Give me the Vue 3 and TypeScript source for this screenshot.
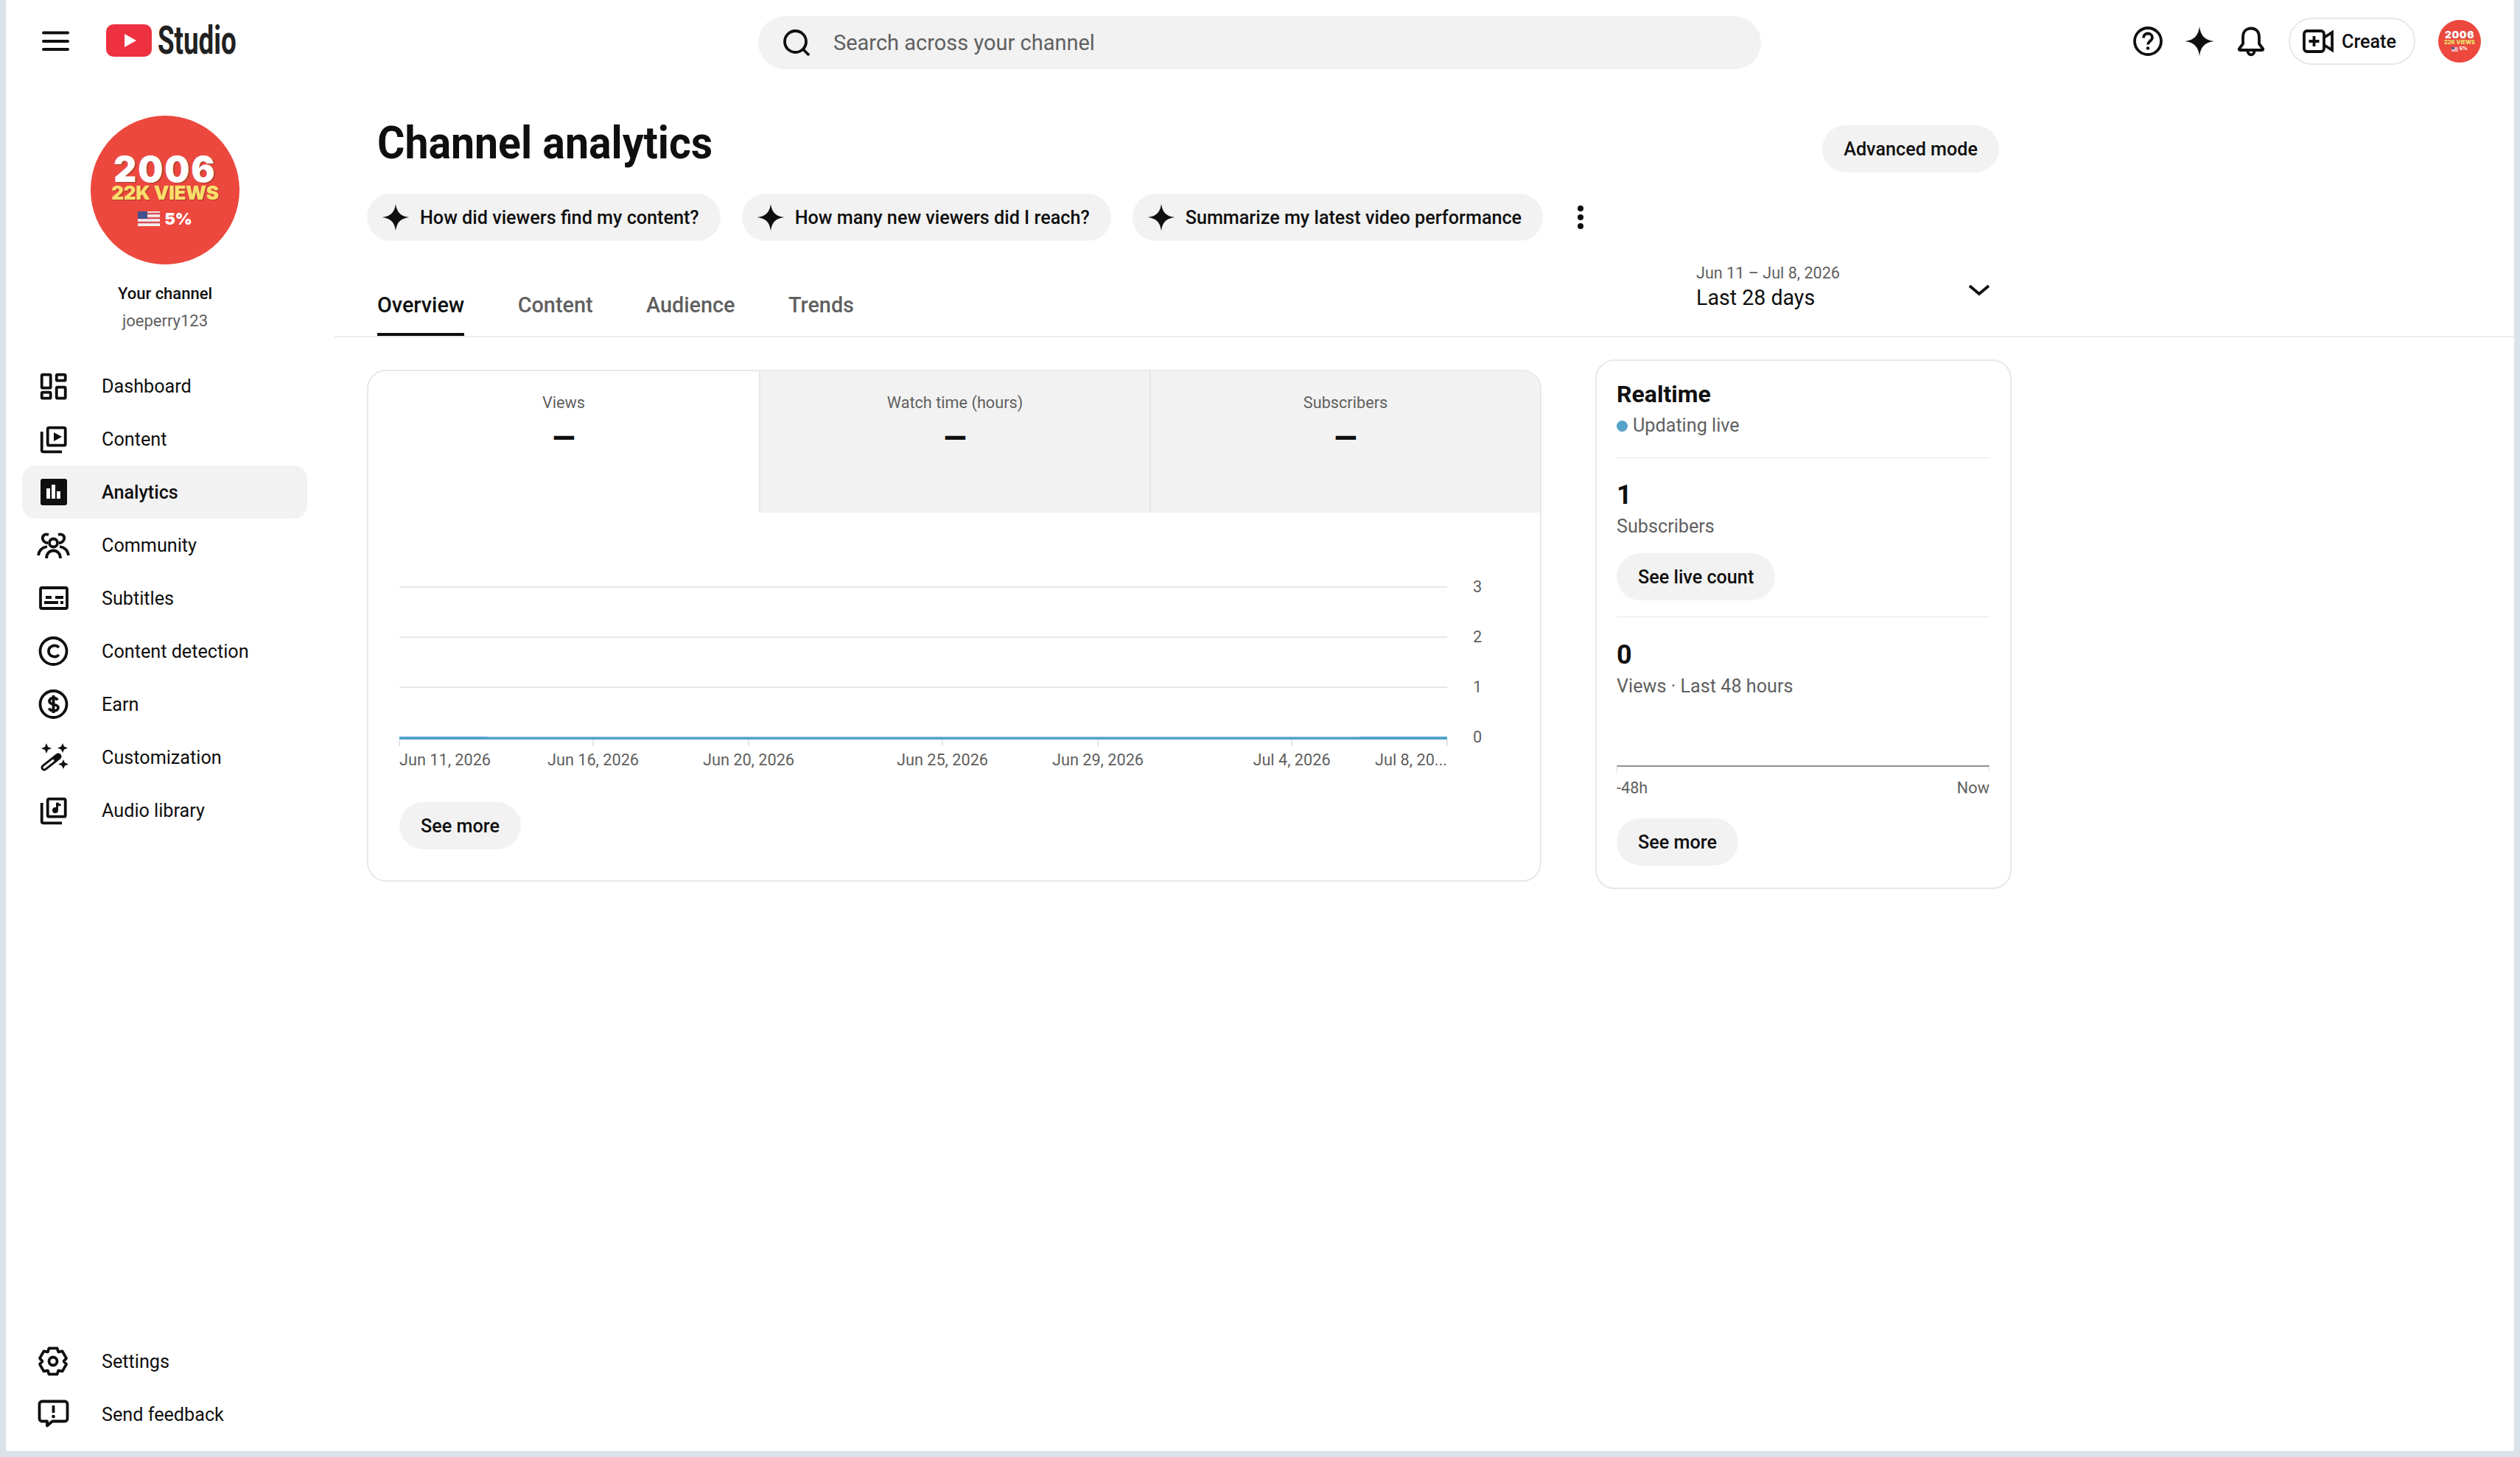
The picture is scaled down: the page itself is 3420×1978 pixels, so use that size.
<template>
  <div class="app">
    <header class="topbar">
      <div class="brand">
        <svg class="burger" width="48" height="48" viewBox="0 0 48 48">
          <path d="M8 12.5h33M8 24h33M8 35h33" />
        </svg>
        <svg class="yt" width="62" height="44" viewBox="0 0 62 44">
          <rect width="62" height="44" rx="10" fill="#ed3140" />
          <path d="M25 13l16 9-16 9z" fill="#fff" />
        </svg>
        <span class="studio">Studio</span>
      </div>
      <div class="search">
        <svg class="ic" width="48" height="48" viewBox="0 0 48 48">
          <circle cx="22.5" cy="22.5" r="14.5" />
          <path d="M33 33l8 8" />
        </svg>
        <span>Search across your channel</span>
      </div>
      <div class="actions">
        <svg class="ic" width="48" height="48" viewBox="0 0 48 48">
          <circle cx="24" cy="24" r="18" />
          <path d="M18 19.5c0-3.500 2.600-6 6-6s6 2.500 6 5.500c0 4.500-6 5-6 9.500" />
          <circle cx="24" cy="33.500" r="2.300" fill="#0f0f0f" stroke="none" />
        </svg>
        <svg width="48" height="48" viewBox="0 0 48 48"><path :d="spark" fill="#0f0f0f" /></svg>
        <svg class="ic" width="48" height="48" viewBox="0 0 48 48">
          <path d="M24 6.500c-7 0-11 5-11 12v9l-5 6.500c-.6 1 0 2 1 2h30c1 0 1.600-1 1-2l-5-6.500v-9c0-7-4-12-11-12z" />
          <path d="M19.500 37c0 7 9 7 9 0" />
        </svg>
        <div class="create">
          <svg class="ic" width="42" height="32" viewBox="0 0 42 32">
            <rect x="2" y="2" width="27" height="28" rx="4" />
            <path d="M15.500 9v14M8.500 16h14M29 11l11-7v24l-11-7" />
          </svg>
          <span>Create</span>
        </div>
        <div class="avatar small">
          <b class="a1">2006</b>
          <b class="a2">22K VIEWS</b>
          <span class="a3">
            <svg class="flag" viewBox="0 0 30 20">
              <rect width="30" height="20" fill="#f3eeee" />
              <path d="M0 3h30M0 9h30M0 15h30" stroke="#d8505a" stroke-width="2.500" />
              <rect width="13" height="10" fill="#44528f" />
            </svg>
            <b>5%</b>
          </span>
        </div>
      </div>
    </header>

    <div class="body">
      <aside class="sidebar">
        <div class="avatar large">
          <b class="a1">2006</b>
          <b class="a2">22K VIEWS</b>
          <span class="a3">
            <svg class="flag" viewBox="0 0 30 20">
              <rect width="30" height="20" fill="#f3eeee" />
              <path d="M0 3h30M0 9h30M0 15h30" stroke="#d8505a" stroke-width="2.500" />
              <rect width="13" height="10" fill="#44528f" />
            </svg>
            <b>5%</b>
          </span>
        </div>
        <div class="your">Your channel</div>
        <div class="handle">joeperry123</div>
        <nav class="nav">
          <a v-for="item in navItems" :key="item.label" class="nav-row" :class="{ active: item.active }">
            <svg class="ic" width="48" height="48" viewBox="0 0 48 48" v-html="item.icon"></svg>
            <span>{{ item.label }}</span>
          </a>
        </nav>
        <nav class="nav bottom">
          <a v-for="item in footItems" :key="item.label" class="nav-row">
            <svg class="ic" width="48" height="48" viewBox="0 0 48 48" v-html="item.icon"></svg>
            <span>{{ item.label }}</span>
          </a>
        </nav>
      </aside>

      <main class="main">
        <div class="head">
          <div class="title-row">
            <h1>Channel analytics</h1>
            <button class="pill">Advanced mode</button>
          </div>
          <div class="chips">
            <div v-for="chip in chips" :key="chip" class="chip">
              <svg width="44" height="44" viewBox="0 0 48 48"><path :d="spark" fill="#0f0f0f" /></svg>
              <span>{{ chip }}</span>
            </div>
            <svg class="kebab" width="12" height="36" viewBox="0 0 12 36">
              <circle cx="6" cy="6" r="4" />
              <circle cx="6" cy="18" r="4" />
              <circle cx="6" cy="30" r="4" />
            </svg>
          </div>
          <div class="tabs-row">
            <div class="tabs">
              <div v-for="(tab, i) in tabs" :key="tab" class="tab" :class="{ on: i === 0 }">{{ tab }}</div>
            </div>
            <div class="range">
              <div>
                <div class="range-dates">Jun 11 – Jul 8, 2026</div>
                <div class="range-name">Last 28 days</div>
              </div>
              <svg class="ic" width="48" height="48" viewBox="0 0 48 48"><path d="M11 22l13 11 13-11" /></svg>
            </div>
          </div>
        </div>

        <div class="cards">
          <section class="card overview">
            <div class="metrics">
              <div v-for="(m, i) in metrics" :key="m" class="metric" :class="{ on: i === 0 }">
                <div class="metric-name">{{ m }}</div>
                <div class="metric-value">—</div>
              </div>
            </div>
            <div class="plot">
              <div v-for="g in gridLines" :key="g.label" class="grid-line" :style="{ top: g.top + 'px' }"></div>
              <div v-for="g in gridLines" :key="'y' + g.label" class="y-label" :style="{ top: g.top - 13 + 'px' }">{{ g.label }}</div>
              <div class="base-line"></div>
              <div class="base-inner"></div>
              <div v-for="t in xTicks" :key="t.x" class="tick" :style="{ left: t.x + 'px' }"></div>
              <div v-for="t in xTicks" :key="t.label" class="x-label" :class="t.align" :style="{ left: t.x + 'px' }">{{ t.label }}</div>
            </div>
            <button class="pill more">See more</button>
          </section>

          <section class="card realtime">
            <h2>Realtime</h2>
            <div class="live"><i></i>Updating live</div>
            <div class="rt-block">
              <div class="big">1</div>
              <div class="sub">Subscribers</div>
              <button class="pill rt-btn">See live count</button>
            </div>
            <div class="rt-block last">
              <div class="big">0</div>
              <div class="sub">Views · Last 48 hours</div>
              <div class="mini-axis"></div>
              <div class="mini-labels"><span>-48h</span><span>Now</span></div>
              <button class="pill rt-more">See more</button>
            </div>
          </section>
        </div>
      </main>
    </div>
  </div>
</template>

<script setup lang="ts">
interface NavItem {
  label: string
  icon: string
  active?: boolean
}

interface Tick {
  x: number
  label: string
  align: string
}

const spark = 'M24 4C25.500 16 31 22.500 44 24 31 25.500 25.500 32 24 44 22.500 32 17 25.500 4 24 17 22.500 22.500 16 24 4z'

// six toothed outline for the settings icon
function gearPath(): string {
  const cx = 24
  const cy = 24
  const pts: string[] = []
  for (let i = 0; i < 6; i++) {
    const a = (-90 + i * 60) * (Math.PI / 180)
    const spread = 0.3
    const pairs: [number, number][] = [
      [a - spread, 18.5],
      [a + spread, 18.5],
      [a + Math.PI / 6, 14.500],
    ]
    for (const [ang, r] of pairs) {
      pts.push((cx + r * Math.cos(ang)).toFixed(1) + ' ' + (cy + r * Math.sin(ang)).toFixed(1))
    }
  }
  return 'M' + pts.join('L') + 'z'
}

const navItems: NavItem[] = [
  {
    label: 'Dashboard',
    icon: '<rect x="8.700" y="8.700" width="12" height="18" rx="1.500"/><rect x="28.700" y="8.700" width="12" height="8" rx="1.500"/><rect x="8.700" y="32.700" width="12" height="8" rx="1.500"/><rect x="28.700" y="25.700" width="12" height="15" rx="1.500"/>',
  },
  {
    label: 'Content',
    icon: '<rect x="16.700" y="8.700" width="24" height="24" rx="2"/><path d="M8.700 14v25c0 1.500.8 2.300 2.300 2.300h25"/><path d="M25 15l11 6-11 6z" fill="#0f0f0f" stroke="none"/>',
  },
  {
    label: 'Analytics',
    active: true,
    icon: '<rect x="7" y="6" width="36" height="36" rx="3" fill="#0f0f0f" stroke="none"/><path d="M15 19h5v14h-5zM22 14h5v19h-5zM29 23h5v10h-5z" fill="#fff" stroke="none"/>',
  },
  {
    label: 'Community',
    icon: '<circle cx="24.500" cy="21" r="5.500"/><path d="M15 42c0-14 19-14 19 0"/><path d="M4 38c1-7 6-11 12-12M18 10c-6-2-9 2-8 6 1 3 3 5 7 5"/><path d="M45 38c-1-7-6-11-12-12M31 10c6-2 9 2 8 6-1 3-3 5-7 5"/>',
  },
  {
    label: 'Subtitles',
    icon: '<rect x="7" y="10" width="36" height="28" rx="2"/><path d="M14 23h8M27 23h11M12 30h19M34 30h4"/>',
  },
  {
    label: 'Content detection',
    icon: '<circle cx="24.500" cy="24" r="18"/><path d="M32 19c-5-5-14-2-14 5s9 10 14 5"/>',
  },
  {
    label: 'Earn',
    icon: '<circle cx="24.500" cy="24" r="18"/><path d="M30 18.500c-1-2-3-3-5.500-3-3.500 0-5.500 2-5.500 4.500 0 6 12 3 12 8.500 0 2.500-2.500 4.500-6 4.500-3 0-5.500-1.500-6.500-3.500M24.500 12v24"/>',
  },
  {
    label: 'Customization',
    icon: '<path d="M12 38l19-15" stroke-width="9" stroke-linecap="round" fill="none"/><path d="M12 38l12-9.500" stroke="#fff" stroke-width="3" stroke-linecap="round"/><path d="M15 5l2 5 5 2-5 2-2 5-2-5-5-2 5-2zM37 5l2 4.500 5 2-5 2-2 4.500-2-4.500-5-2 5-2zM38 27l2 4.500 5 2-5 2-2 4.500-2-4.500-5-2 5-2z" fill="#0f0f0f" stroke="none"/>',
  },
  {
    label: 'Audio library',
    icon: '<rect x="16.700" y="8.700" width="24" height="24" rx="2"/><path d="M8.700 14v25c0 1.500.8 2.300 2.300 2.300h25"/><circle cx="27" cy="24" r="4" fill="#0f0f0f" stroke="none"/><path d="M29.500 24v-10c1 2 3 3 5 3" stroke-width="3"/>',
  },
]

const footItems: NavItem[] = [
  {
    label: 'Settings',
    icon: `<path d="${gearPath()}" stroke-linejoin="round"/><circle cx="24" cy="24" r="5.500"/>`,
  },
  {
    label: 'Send feedback',
    icon: '<path d="M9 6.500h31c2 0 3.500 1.500 3.500 3.500v20c0 2-1.500 3.500-3.500 3.500H23l-7 6v-6H9c-2 0-3.500-1.500-3.500-3.500V10c0-2 1.500-3.500 3.500-3.500z" stroke-linejoin="round"/><path d="M24.500 12v10"/><circle cx="24.500" cy="27" r="2.300" fill="#0f0f0f" stroke="none"/>',
  },
]

const chips = [
  'How did viewers find my content?',
  'How many new viewers did I reach?',
  'Summarize my latest video performance',
]

const tabs = ['Overview', 'Content', 'Audience', 'Trends']
const metrics = ['Views', 'Watch time (hours)', 'Subscribers']

const gridLines = [
  { label: '3', top: 100 },
  { label: '2', top: 168 },
  { label: '1', top: 236 },
  { label: '0', top: 304 },
]

const xTicks: Tick[] = [
  { x: 0, label: 'Jun 11, 2026', align: 'start' },
  { x: 263, label: 'Jun 16, 2026', align: 'mid' },
  { x: 474, label: 'Jun 20, 2026', align: 'mid' },
  { x: 737, label: 'Jun 25, 2026', align: 'mid' },
  { x: 948, label: 'Jun 29, 2026', align: 'mid' },
  { x: 1211, label: 'Jul 4, 2026', align: 'mid' },
  { x: 1422, label: 'Jul 8, 20...', align: 'end' },
]
</script>

<style scoped>
.app {
  width: 3404px;
  height: 1970px;
  margin-left: 8px;
  background: #fff;
  color: #0f0f0f;
  font-family: Roboto, "Liberation Sans", sans-serif;
  display: flex;
  flex-direction: column;
  overflow: hidden;
}

.ic {
  fill: none;
  stroke: #0f0f0f;
  stroke-width: 3.8;
  flex: none;
}

/* top bar */
.topbar {
  height: 112px;
  flex: none;
  display: grid;
  grid-template-columns: 1021px 1361px 1fr;
  align-items: center;
}

.brand {
  display: flex;
  align-items: center;
  padding-left: 43px;
}

.burger {
  fill: none;
  stroke: #0f0f0f;
  stroke-width: 4;
  stroke-linecap: round;
}

.yt {
  margin-left: 45px;
  margin-top: -2px;
}

.studio {
  display: inline-block;
  margin-left: 8px;
  margin-top: -2px;
  font-size: 54px;
  font-weight: 700;
  line-height: 56px;
  color: #212121;
  transform: scaleX(0.68);
  transform-origin: left center;
}

.search {
  height: 72px;
  margin-top: 4px;
  border-radius: 36px;
  background: #f2f2f2;
  display: flex;
  align-items: center;
  padding-left: 28px;
  gap: 26px;
  font-size: 29px;
  color: #606060;
}

.actions {
  display: flex;
  align-items: center;
  justify-content: flex-end;
  padding-right: 45px;
  gap: 22px;
}

.create {
  margin-left: 5px;
  margin-right: 9px;
  height: 64px;
  width: 172px;
  box-sizing: border-box;
  border: 2px solid #e8e8e8;
  border-radius: 32px;
  display: flex;
  align-items: center;
  padding-left: 17px;
  gap: 11px;
  font-size: 25.2px;
  font-weight: 500;
}

/* channel picture, sized through font-size */
.avatar {
  box-sizing: border-box;
  padding-top: 0.75em;
  border-radius: 50%;
  background: #ec483e;
  display: flex;
  flex-direction: column;
  align-items: center;
  justify-content: center;
  flex: none;
  color: #fff;
  font-family: Inter, Roboto, sans-serif;
  width: 10.1em;
  height: 10.1em;
}

.avatar.large {
  font-size: 20px;
  margin: 0 auto;
}

.avatar.small {
  font-size: 5.750px;
}

.avatar b {
  font-weight: 900;
}

.a1 {
  font-size: 2.4em;
  line-height: 0.83em;
  letter-spacing: 0.04em;
  text-shadow: 0.03em 0.03em 0 #a83a32;
}

.a2 {
  font-size: 1.3em;
  line-height: 1em;
  color: #f8df6b;
  letter-spacing: -0.01em;
  white-space: nowrap;
  text-shadow: 0.04em 0.04em 0 #a83a32;
}

.a3 {
  display: flex;
  align-items: center;
  gap: 0.3em;
  margin-top: 0.6em;
  margin-bottom: 0.7em;
  font-size: 1em;
  line-height: 1em;
}

.a3 b {
  font-size: 1.1em;
}

.flag {
  width: 1.5em;
  height: 1em;
}

/* sidebar */
.body {
  flex: 1;
  display: flex;
  min-height: 0;
}

.sidebar {
  width: 446px;
  flex: none;
  box-sizing: border-box;
  padding: 45px 14px 14px 0;
  display: flex;
  flex-direction: column;
}

.your {
  margin-top: 26px;
  text-align: center;
  font-size: 22px;
  font-weight: 500;
  line-height: 28px;
}

.handle {
  margin-top: 9px;
  text-align: center;
  font-size: 22px;
  line-height: 28px;
  color: #606060;
}

.nav {
  margin-top: 38px;
  padding: 0 23px 0 22px;
}

.nav.bottom {
  margin-top: auto;
}

.nav-row {
  height: 72px;
  display: flex;
  align-items: center;
  padding-left: 18px;
  gap: 42px;
  font-size: 25.2px;
  border-radius: 18px;
}

.nav-row.active {
  background: #f2f2f2;
  font-weight: 500;
}

/* main column */
.main {
  flex: 1;
  min-width: 0;
}

.head {
  box-sizing: border-box;
  width: 100%;
  padding-top: 58px;
  border-bottom: 2px solid #eeeeee;
}

.title-row {
  width: 2201px;
  margin-left: 58px;
  height: 64px;
  display: flex;
  justify-content: space-between;
}

h1 {
  margin: 0;
  font-size: 62px;
  font-weight: 700;
  line-height: 48px;
  white-space: nowrap;
  transform: scaleX(0.922);
  transform-origin: left center;
}

.pill {
  height: 64px;
  padding: 0 29px;
  border: none;
  border-radius: 32px;
  background: #f2f2f2;
  color: #0f0f0f;
  font-family: inherit;
  font-size: 25.2px;
  font-weight: 500;
  display: block;
}

.chips {
  margin: 29px 0 0 44px;
  display: flex;
  align-items: center;
  gap: 29px;
}

.chip {
  height: 64px;
  border-radius: 32px;
  background: #f2f2f2;
  padding: 0 29px 0 17px;
  display: flex;
  align-items: center;
  gap: 11px;
  font-size: 25.2px;
  font-weight: 500;
  white-space: nowrap;
}

.kebab {
  fill: #0f0f0f;
  margin-left: 16px;
}

.tabs-row {
  width: 2276px;
  height: 129px;
  display: flex;
  justify-content: space-between;
  align-items: flex-end;
}

.tabs {
  margin-left: 58px;
  display: flex;
  gap: 72.5px;
}

.tab {
  font-size: 28.8px;
  font-weight: 500;
  line-height: 36px;
  padding-bottom: 20px;
  border-bottom: 4px solid transparent;
  color: #606060;
}

.tab.on {
  color: #0f0f0f;
  border-bottom-color: #0f0f0f;
}

.range {
  align-self: flex-start;
  margin-top: 30px;
  width: 408px;
  margin-right: 20px;
  display: flex;
  justify-content: space-between;
  align-items: center;
}

.range-dates {
  font-size: 21.6px;
  line-height: 28px;
  color: #606060;
}

.range-name {
  font-size: 28.6px;
  line-height: 38px;
}

.cards {
  padding: 30px 0 0 44px;
  display: flex;
  align-items: flex-start;
  gap: 73px;
}

.card {
  box-sizing: border-box;
  border: 2px solid #e8e8e8;
  border-radius: 26px;
  overflow: hidden;
  background: #fff;
}

.overview {
  width: 1594px;
  height: 695px;
  margin-top: 14px;
}

.metrics {
  display: grid;
  grid-template-columns: repeat(3, 1fr);
  height: 192px;
}

.metric {
  background: #f2f2f2;
  text-align: center;
  padding-top: 29px;
  box-sizing: border-box;
}

.metric + .metric {
  border-left: 2px solid #e5e5e5;
}

.metric.on {
  background: #fff;
}

.metric-name {
  font-size: 21.7px;
  line-height: 28px;
  color: #606060;
}

.metric-value {
  font-size: 40px;
  font-weight: 900;
  line-height: 44px;
  margin-top: 13px;
}

/* chart */
.plot {
  position: relative;
  margin-left: 42px;
  width: 1422px;
  height: 354px;
}

.grid-line {
  position: absolute;
  left: 0;
  right: 0;
  height: 2px;
  background: #e8e8e8;
}

.base-line {
  position: absolute;
  left: 0;
  right: 0;
  top: 304px;
  height: 4px;
  background: #55a3c9;
}

.base-inner {
  position: absolute;
  left: 119px;
  right: 119px;
  top: 304px;
  height: 1px;
  background: #8cc2dc;
}

.y-label {
  position: absolute;
  left: 1457px;
  font-size: 21.7px;
  line-height: 28px;
  color: #606060;
}

.tick {
  position: absolute;
  top: 308px;
  width: 2px;
  height: 9px;
  margin-left: -1px;
  background: #e5e5e5;
}

.x-label {
  position: absolute;
  top: 322px;
  font-size: 21.7px;
  line-height: 28px;
  color: #606060;
  white-space: nowrap;
}

.x-label.mid {
  transform: translateX(-50%);
}

.x-label.end {
  transform: translateX(-100%);
}

.more {
  margin: 39px 0 0 42px;
}

/* realtime card */
.realtime {
  width: 565px;
  padding: 25px 28px 30px 27px;
}

h2 {
  margin: 0;
  font-size: 32px;
  font-weight: 700;
  line-height: 40px;
}

.live {
  margin-top: 7px;
  display: flex;
  align-items: center;
  font-size: 25.2px;
  line-height: 32px;
  color: #606060;
}

.live i {
  width: 15px;
  height: 15px;
  border-radius: 50%;
  background: #55a3c9;
  margin-right: 7px;
}

.rt-block {
  margin-top: 27px;
  padding-top: 28px;
  border-top: 1px solid #e8e8e8;
}

.rt-block + .rt-block {
  margin-top: 22px;
  padding-top: 29px;
}

.big {
  font-size: 36px;
  font-weight: 700;
  line-height: 44px;
}

.sub {
  margin-top: 5px;
  font-size: 25.2px;
  line-height: 32px;
  color: #606060;
}

.rt-btn {
  margin-top: 20px;
}

.mini-axis {
  margin-top: 91px;
  height: 10px;
  box-sizing: border-box;
  border: 1px solid #dddddd;
  border-top: 2px solid #909090;
  border-bottom: none;
}

.mini-labels {
  margin-top: 7px;
  display: flex;
  justify-content: space-between;
  font-size: 21.7px;
  line-height: 28px;
  color: #606060;
}

.rt-more {
  margin-top: 27px;
}
</style>

<style>
html {
  background: #dbe3ea;
  overflow: hidden;
}
</style>
